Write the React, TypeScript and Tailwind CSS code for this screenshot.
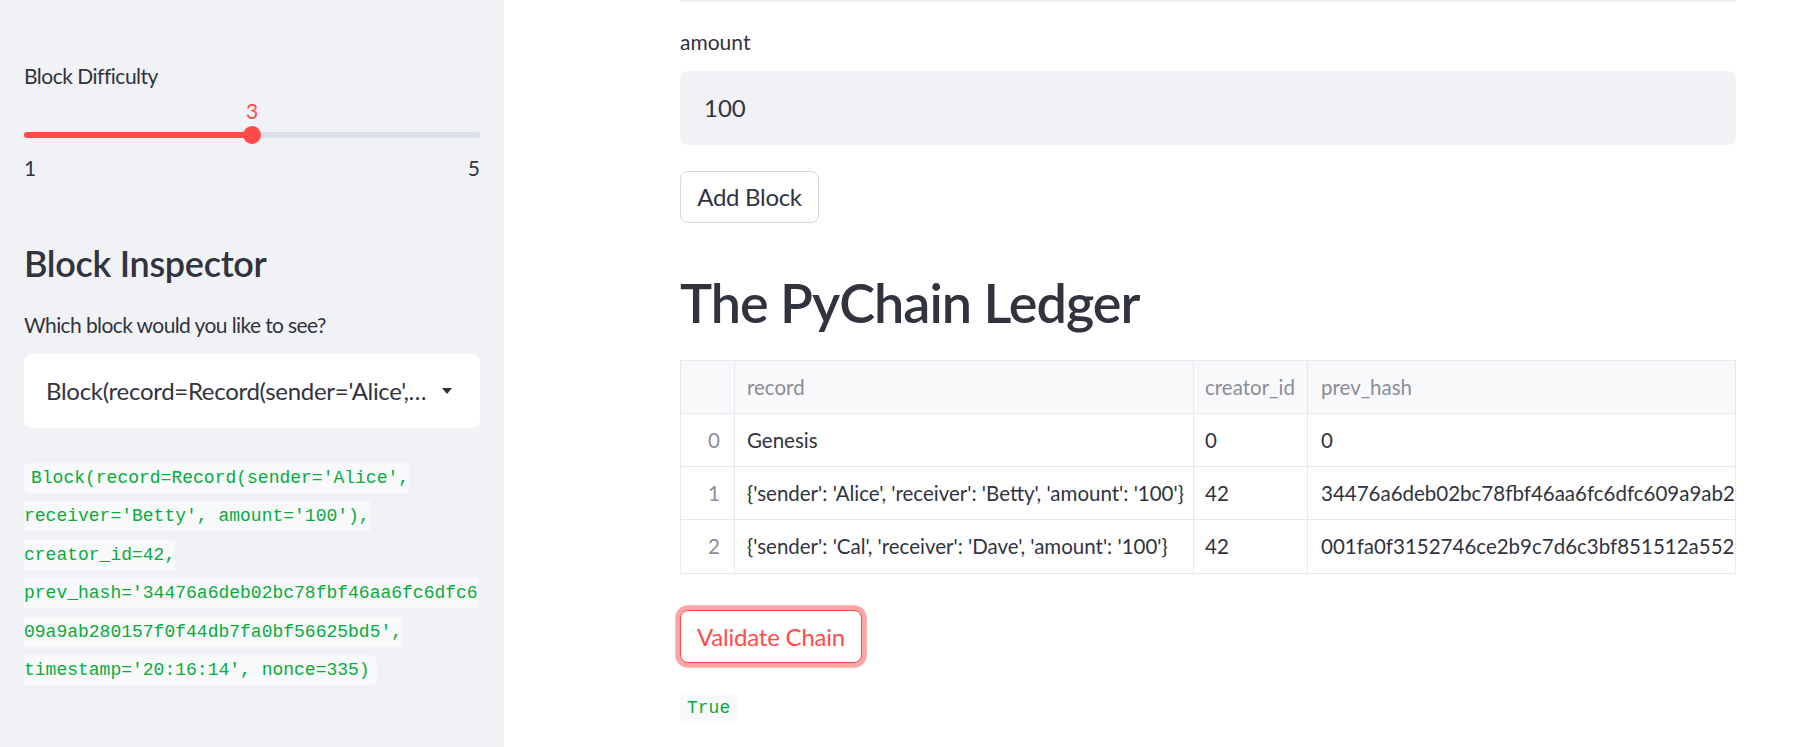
import React from "react";

const rows = [
  { i: "0", record: "Genesis", creator: "0", prev: "0" },
  {
    i: "1",
    record: "{'sender': 'Alice', 'receiver': 'Betty', 'amount': '100'}",
    creator: "42",
    prev: "34476a6deb02bc78fbf46aa6fc6dfc609a9ab280157f0f44db7fa0bf56625bd5",
  },
  {
    i: "2",
    record: "{'sender': 'Cal', 'receiver': 'Dave', 'amount': '100'}",
    creator: "42",
    prev: "001fa0f3152746ce2b9c7d6c3bf851512a552a11b4e0c7d2a9f3b61e8c05d27a",
  },
];

function Sidebar() {
  return (
    <aside className="w-[504px] shrink-0 h-[747px] bg-[#f0f2f6] px-6 pt-[59px]">
      <div className="h-[34px] leading-[34px] text-[21px] tracking-[-0.5px]">Block Difficulty</div>

      {/* slider */}
      <div className="relative mt-[6px] h-[24px]">
        <span className="absolute left-1/2 -translate-x-1/2 top-0 leading-[24px] text-[21px] text-[#ff4b4b]">
          3
        </span>
      </div>
      <div className="relative mt-[3px] h-[18px] flex items-center">
        <div className="h-[6px] w-full rounded-full bg-[#dadfe9]" />
        <div className="absolute left-0 top-[6px] h-[6px] w-1/2 rounded-full bg-[#ff4b4b]" />
        <div className="absolute left-1/2 top-0 -translate-x-1/2 h-[18px] w-[18px] rounded-full bg-[#ff4b4b]" />
      </div>
      <div className="mt-[12px] h-[24px] flex justify-between items-center text-[21px] leading-[24px]">
        <span>1</span>
        <span>5</span>
      </div>

      <h2 className="mt-[59px] h-[48px] leading-[48px] text-[36px] font-semibold tracking-[-0.3px]">Block Inspector</h2>

      <div className="mt-[22px] h-[32px] leading-[32px] text-[21px] tracking-[-0.6px]">
        Which block would you like to see?
      </div>

      <div className="mt-[13px] h-[74px] rounded-[8px] bg-white flex items-center pl-[22px] pr-[28px]">
        <span className="flex-1 text-[24px] tracking-[-0.3px] whitespace-nowrap overflow-hidden">
          Block(record=Record(sender='Alice',…
        </span>
        <svg width="10" height="6" viewBox="0 0 10 6" className="shrink-0">
          <path d="M0 0 L10 0 L5 6 Z" fill="#31333f" />
        </svg>
      </div>

      <p className="mt-[27px] text-[24px] leading-[38.4px] break-words">
        <code className="font-['Liberation_Mono',monospace] text-[18px] leading-none text-[#09ab3b] bg-[#f8f9fb] rounded-[6px] px-[7px] py-[5px]">
          Block(record=Record(sender='Alice', receiver='Betty', amount='100'), creator_id=42,
          prev_hash='34476a6deb02bc78fbf46aa6fc6dfc609a9ab280157f0f44db7fa0bf56625bd5', timestamp='20:16:14',
          nonce=335)
        </code>
      </p>
    </aside>
  );
}

function Table() {
  const cell = "border-[#e6e9ef] flex items-center overflow-hidden whitespace-nowrap";
  return (
    <div className="mt-[25px] w-[1056px] border border-[#e6e9ef] grid grid-cols-[54px_459px_114px_1fr] text-[20.5px]">
      <div className={`${cell} h-[53px] border-r border-b bg-[#f8f9fb]`} />
      <div className={`${cell} h-[53px] border-r border-b bg-[#f8f9fb] pl-[12px] text-[#8a8d96]`}>record</div>
      <div className={`${cell} h-[53px] border-r border-b bg-[#f8f9fb] pl-[11px] text-[#8a8d96]`}>creator_id</div>
      <div className={`${cell} h-[53px] border-b bg-[#f8f9fb] pl-[13px] text-[#8a8d96]`}>prev_hash</div>
      {rows.map((r, idx) => {
        const last = idx === rows.length - 1;
        const b = last ? "" : "border-b";
        return (
          <React.Fragment key={r.i}>
            <div className={`${cell} h-[53px] border-r ${b} justify-end pr-[14px] text-[#8a8d96]`}>{r.i}</div>
            <div className={`${cell} h-[53px] border-r ${b} pl-[12px]`}>{r.record}</div>
            <div className={`${cell} h-[53px] border-r ${b} pl-[11px]`}>{r.creator}</div>
            <div className={`${cell} h-[53px] ${b} pl-[13px]`}>{r.prev}</div>
          </React.Fragment>
        );
      })}
    </div>
  );
}

function Main() {
  return (
    <main className="flex-1 h-[747px] bg-white pl-[176px]">
      <div className="w-[1056px]">
        <div className="h-[2px] w-full rounded-b-[6px] bg-[#eceef3]" />
        <div className="mt-[23px] h-[34px] leading-[34px] text-[21px]">amount</div>
        <div className="mt-[12px] h-[74px] rounded-[8px] bg-[#f0f2f6] flex items-center pl-[24px] text-[24px]">
          100
        </div>
        <button className="mt-[26px] h-[52px] w-[139px] rounded-[8px] border border-[#d6d7da] bg-white text-[24px] tracking-[-0.3px] text-[#31333f] flex items-center justify-center">
          Add Block
        </button>
        <h1 className="mt-[47px] h-[65px] leading-[65px] text-[54px] font-semibold tracking-[-1px]">
          The PyChain Ledger
        </h1>
        <Table />
        <button className="mt-[36px] h-[53px] w-[182px] rounded-[8px] border border-[#ff4b4b] bg-white text-[24px] tracking-[-0.2px] text-[#ff4b4b] flex items-center justify-center shadow-[0_0_0_4.8px_rgba(255,75,75,0.5)]">
          Validate Chain
        </button>
        <p className="mt-[22px] text-[24px] leading-[38.4px]">
          <code className="font-['Liberation_Mono',monospace] text-[18px] leading-none text-[#09ab3b] bg-[#f8f9fb] rounded-[6px] px-[7px] py-[5px]">
            True
          </code>
        </p>
      </div>
    </main>
  );
}

export default function App() {
  return (
    <div className="flex w-[1807px] h-[747px] overflow-hidden font-['Lato','Noto_Sans',sans-serif] text-[#31333f]">
      <Sidebar />
      <Main />
    </div>
  );
}
